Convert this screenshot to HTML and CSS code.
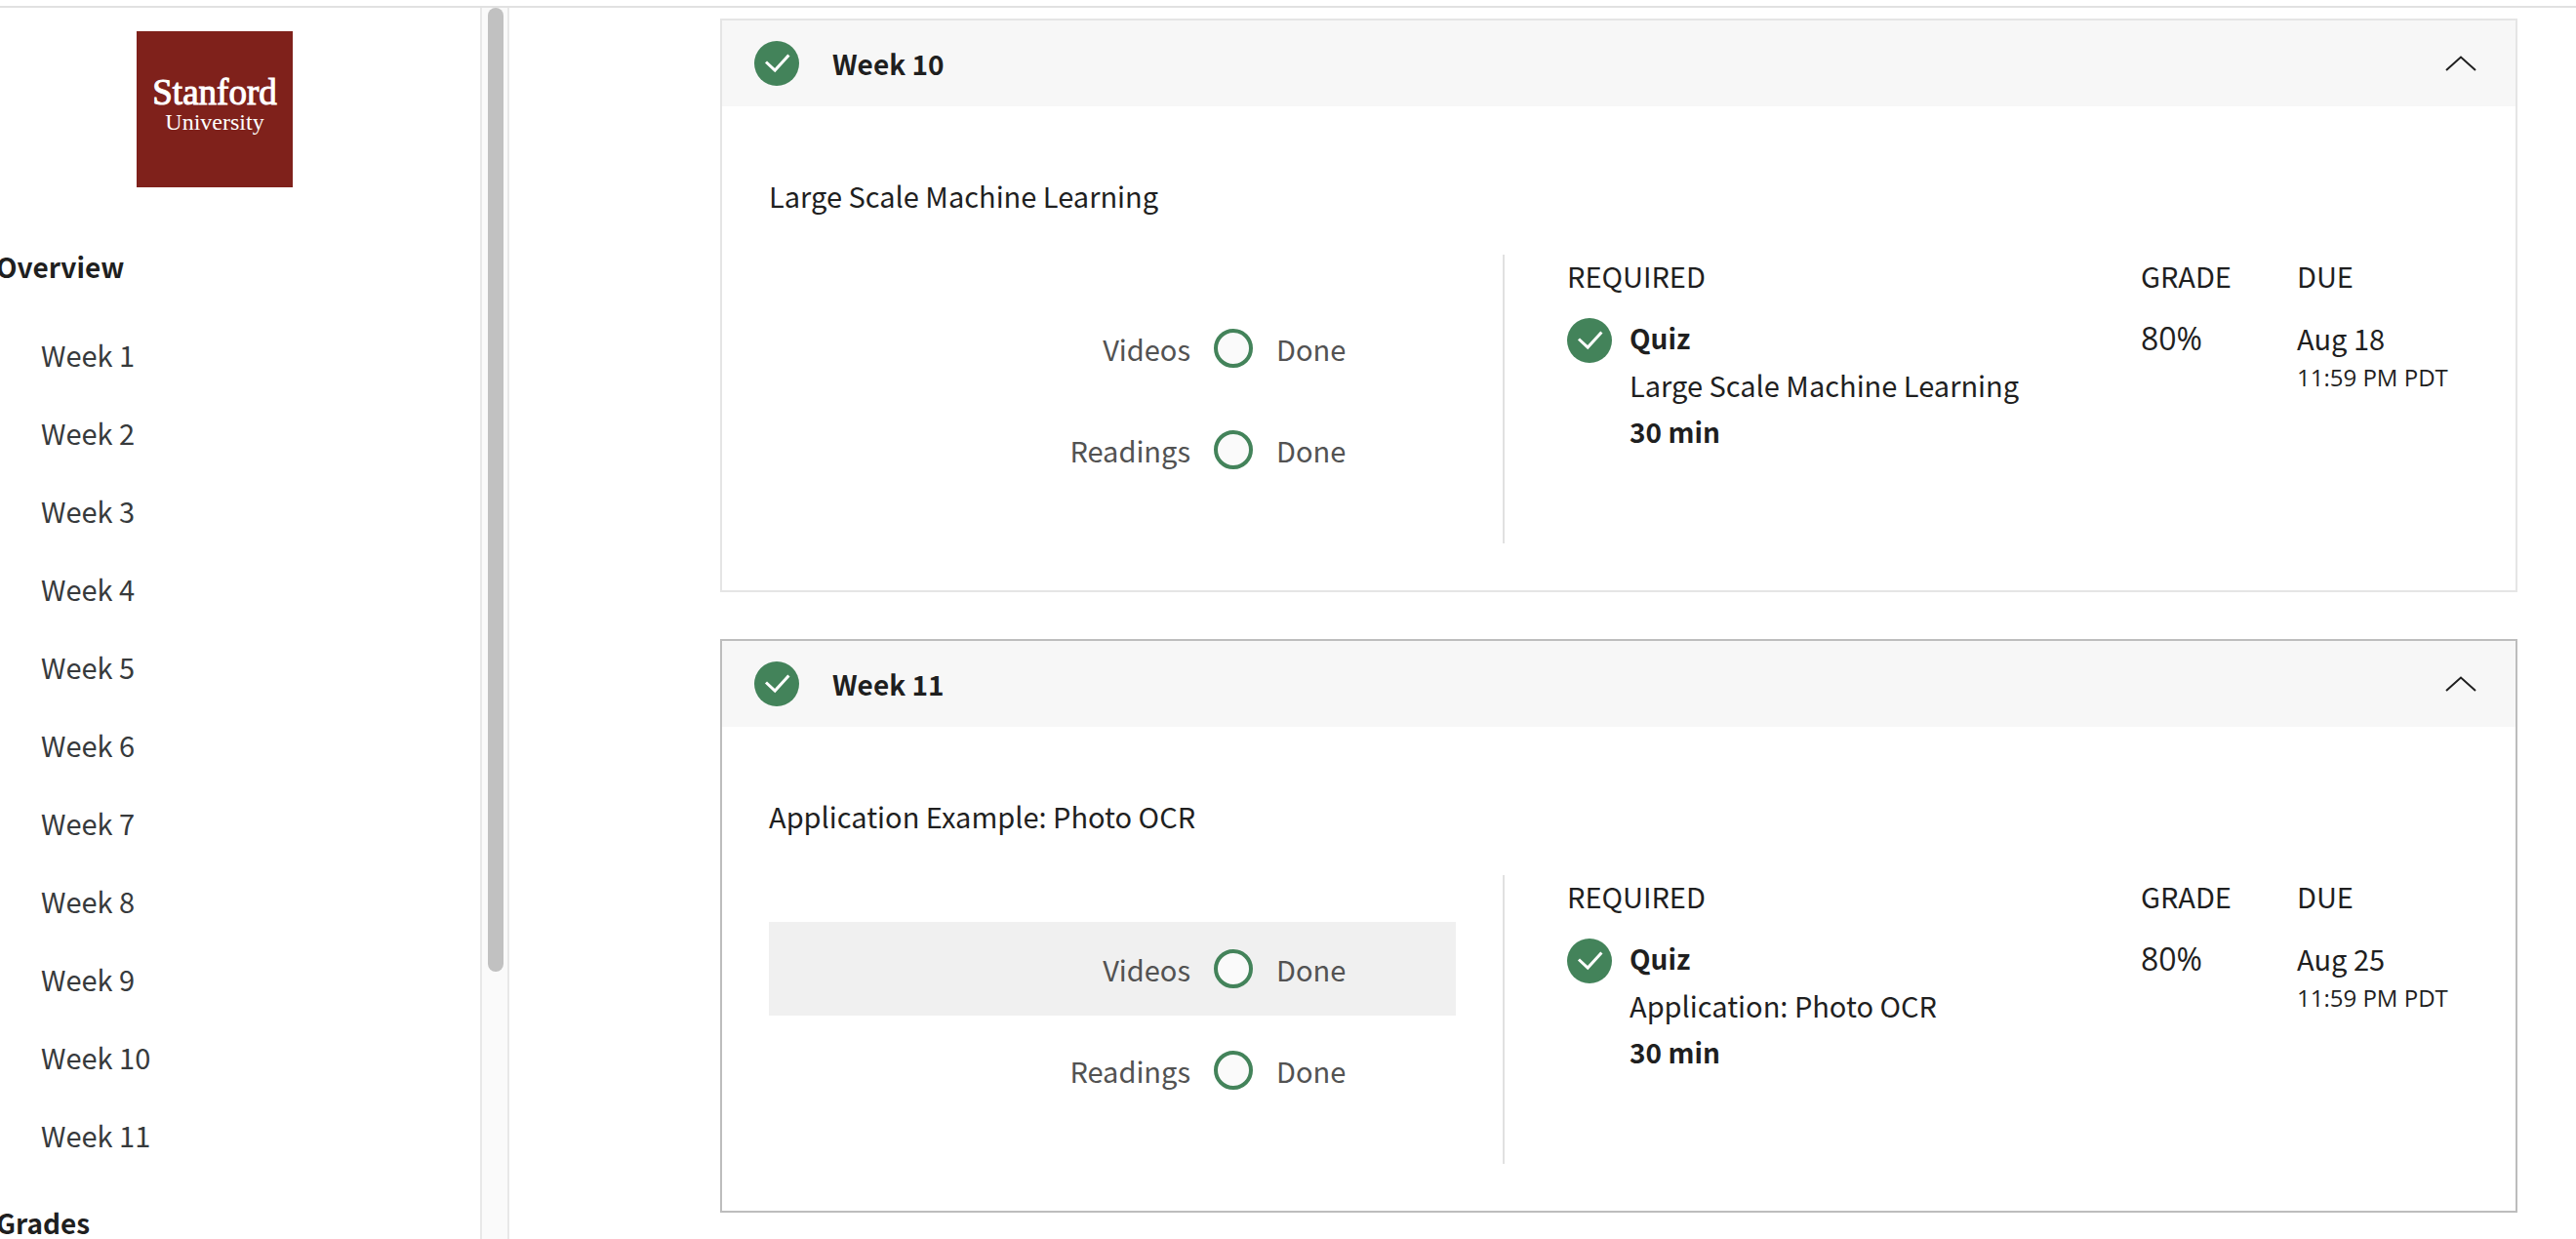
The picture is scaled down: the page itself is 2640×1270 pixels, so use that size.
FILE: index.html
```
<!DOCTYPE html>
<html lang="en">
<head>
<meta charset="utf-8">
<meta name="viewport" content="width=device-width, initial-scale=1">
<title>Machine Learning - Overview</title>
<link rel="stylesheet" href="styles.css">
</head>
<body>
<svg class="sprite" aria-hidden="true">
  <symbol id="check" viewBox="0 0 46 46">
    <circle cx="23" cy="23" r="23" fill="#43835a"/>
    <path d="M12 21.5 L21.2 30 L35.4 14.4" fill="none" stroke="#fff" stroke-width="3"/>
  </symbol>
  <symbol id="chevron" viewBox="0 0 32 16">
    <path d="M1 15 L16 1.5 L31 15" fill="none" stroke="#1f1f1f" stroke-width="2"/>
  </symbol>
</svg>
<div class="layout">
  <aside class="sidebar">
    <div class="logo"><span class="logo-name">Stanford</span><span class="logo-kind">University</span></div>
    <nav class="nav">
      <a class="nav-main" href="#overview">Overview</a>
      <ul class="weeks">
        <li><a href="#week1">Week 1</a></li>
        <li><a href="#week2">Week 2</a></li>
        <li><a href="#week3">Week 3</a></li>
        <li><a href="#week4">Week 4</a></li>
        <li><a href="#week5">Week 5</a></li>
        <li><a href="#week6">Week 6</a></li>
        <li><a href="#week7">Week 7</a></li>
        <li><a href="#week8">Week 8</a></li>
        <li><a href="#week9">Week 9</a></li>
        <li><a href="#week10">Week 10</a></li>
        <li><a href="#week11">Week 11</a></li>
      </ul>
      <a class="nav-main" href="#grades">Grades</a>
    </nav>
  </aside>
  <div class="track"><div class="thumb"></div></div>
  <main class="main">
    <section class="card" id="week10">
      <button class="card-head" type="button" aria-expanded="true">
        <svg class="check"><use href="#check"/></svg>
        <span class="card-week">Week 10</span>
        <svg class="chevron"><use href="#chevron"/></svg>
      </button>
      <div class="card-body">
        <h2 class="topic">Large Scale Machine Learning</h2>
        <div class="columns">
          <div class="progress">
            <a class="step" href="#videos10"><span class="step-label">Videos</span><span class="ring"></span><span>Done</span></a>
            <a class="step" href="#readings10"><span class="step-label">Readings</span><span class="ring"></span><span>Done</span></a>
          </div>
          <div class="required">
            <table class="tasks">
              <thead><tr><th>REQUIRED</th><th class="col-grade">GRADE</th><th class="col-due">DUE</th></tr></thead>
              <tbody><tr>
                <td><a class="task" href="#quiz10"><svg class="check"><use href="#check"/></svg><span class="task-text"><strong>Quiz</strong><span>Large Scale Machine Learning</span><strong>30 min</strong></span></a></td>
                <td class="grade">80%</td>
                <td>Aug 18<div class="time">11:59 PM PDT</div></td>
              </tr></tbody>
            </table>
          </div>
        </div>
      </div>
    </section>
    <section class="card card-active" id="week11">
      <button class="card-head" type="button" aria-expanded="true">
        <svg class="check"><use href="#check"/></svg>
        <span class="card-week">Week 11</span>
        <svg class="chevron"><use href="#chevron"/></svg>
      </button>
      <div class="card-body">
        <h2 class="topic">Application Example: Photo OCR</h2>
        <div class="columns">
          <div class="progress">
            <a class="step step-active" href="#videos11"><span class="step-label">Videos</span><span class="ring"></span><span>Done</span></a>
            <a class="step" href="#readings11"><span class="step-label">Readings</span><span class="ring"></span><span>Done</span></a>
          </div>
          <div class="required">
            <table class="tasks">
              <thead><tr><th>REQUIRED</th><th class="col-grade">GRADE</th><th class="col-due">DUE</th></tr></thead>
              <tbody><tr>
                <td><a class="task" href="#quiz11"><svg class="check"><use href="#check"/></svg><span class="task-text"><strong>Quiz</strong><span>Application: Photo OCR</span><strong>30 min</strong></span></a></td>
                <td class="grade">80%</td>
                <td>Aug 25<div class="time">11:59 PM PDT</div></td>
              </tr></tbody>
            </table>
          </div>
        </div>
      </div>
    </section>
  </main>
</div>
</body>
</html>
```
FILE: styles.css
```
* { box-sizing: border-box; }

body {
  margin: 0;
  height: 100vh;
  overflow: hidden;
  padding-top: 6px;
  background: #fff;
  color: #1f1f1f;
  font-family: "Noto Sans CJK SC", "Noto Sans", sans-serif;
  font-size: 29px;
  line-height: 48px;
}

a { color: inherit; text-decoration: none; }

.sprite { display: none; }

.layout {
  display: flex;
  height: 100%;
  border-top: 2px solid #e1e1e1;
}

/* Sidebar, scrolled a little to the right */
.sidebar {
  flex: none;
  width: 544px;
  margin-left: -52px;
  padding: 24px 48px 0;
}

.logo {
  display: flex;
  flex-direction: column;
  align-items: center;
  width: 160px;
  height: 160px;
  margin: 0 auto 57px;
  padding-top: 45px;
  background: #7f211b;
  color: #fff;
  font-family: "Liberation Serif", serif;
}

.logo-name { font-size: 37px; line-height: 36px; -webkit-text-stroke: 1px #fff; }
.logo-kind { font-size: 24px; line-height: 24px; }

.nav-main { display: block; font-size: 28px; font-weight: 700; }

.weeks {
  display: grid;
  gap: 32px;
  margin: 42px 0;
  padding: 0 0 0 46px;
  list-style: none;
  color: #373a3c;
}

.weeks a { display: block; }

.track {
  flex: none;
  width: 30px;
  padding: 0 4px 0 6px;
  border: solid #e8e8e8;
  border-width: 0 2px;
  background: #fafafa;
}

.thumb {
  width: 16px;
  height: calc(100% * 18 / 23);
  border-radius: 8px;
  background: #c1c1c1;
}

.main {
  flex: 1;
  display: flex;
  flex-direction: column;
  gap: 48px;
  padding: 11px 60px 0 216px;
}

.card { border: 2px solid #e5e5e5; }
.card-active { border-color: #bdbdbd; }

.card-head {
  display: flex;
  align-items: center;
  width: 100%;
  height: 88px;
  padding: 0 40px 0 33px;
  border: 0;
  background: #f7f7f7;
  color: inherit;
  font: inherit;
  text-align: left;
}

.card-week { flex: 1; padding-left: 34px; font-size: 28px; font-weight: 600; }

.check { flex: none; width: 46px; height: 46px; }
.chevron { width: 32px; height: 16px; }

.card-body { padding: 71px 48px 48px; }

.topic {
  margin: 0 0 41px;
  font-size: 29px;
  font-weight: 400;
  line-height: 40px;
}

.columns { display: grid; grid-template-columns: 752fr 990fr; }

.progress {
  display: grid;
  gap: 8px;
  padding: 48px 48px 48px 0;
  color: #525252;
}

.step {
  display: grid;
  grid-template-columns: 54fr 40px 23fr;
  gap: 24px;
  align-items: center;
  height: 96px;
}

.step-active { background: #f0f0f0; }
.step-label { text-align: right; }

.ring {
  height: 40px;
  border: 4px solid #43835a;
  border-radius: 50%;
  background: #fafafa;
}

.required { padding-left: 64px; border-left: 2px solid #e1e1e1; }

.tasks { width: 100%; border-collapse: collapse; table-layout: fixed; }
.tasks th { padding: 0 0 19px; font-weight: 400; line-height: 42px; text-align: left; }
.tasks td { padding: 0; vertical-align: top; }
.col-grade { width: 160px; }
.col-due { width: 176px; }

.task { display: flex; gap: 18px; }
.task .check { margin-top: 4px; }
.task-text { display: flex; flex-direction: column; }
.task strong { font-size: 28px; font-weight: 600; }

.tasks .grade { padding-top: 1px; font-family: "Open Sans", sans-serif; font-size: 32px; }
.time { font-family: "Open Sans", sans-serif; font-size: 24px; line-height: 34px; white-space: nowrap; }
```
